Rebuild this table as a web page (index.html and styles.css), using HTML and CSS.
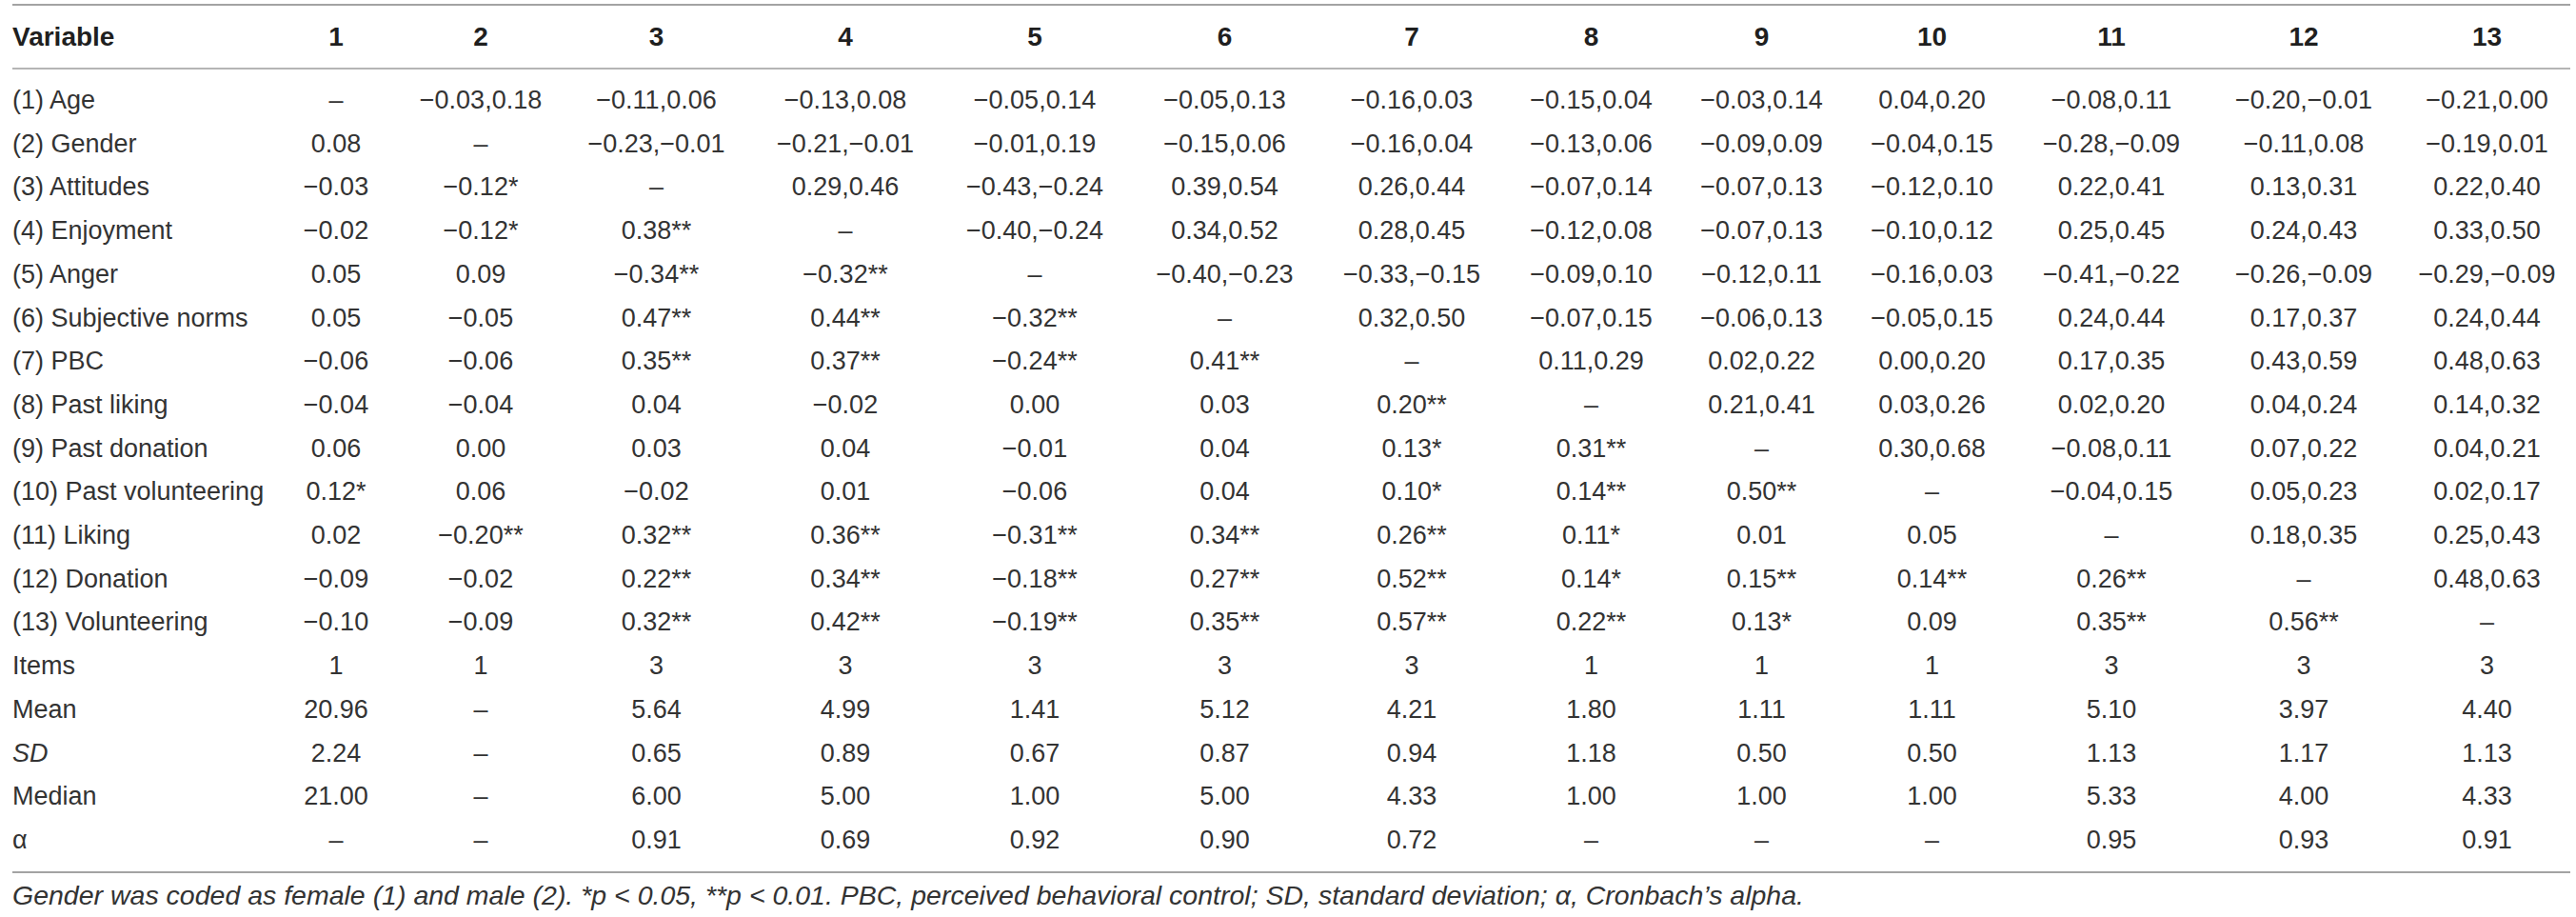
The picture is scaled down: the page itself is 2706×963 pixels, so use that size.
FILE: index.html
```html
<!DOCTYPE html>
<html lang="en">
<head>
    <meta charset="UTF-8">
    <meta name="viewport" content="width=device-width, initial-scale=1.0">
    <title>Correlations and descriptive statistics</title>
    <link rel="stylesheet" href="styles.css">
</head>
<body>

    <div class="table-wrap">
        <table class="corr-table">
            <colgroup>
                <col class="c-var">
                <col class="c-1">
                <col class="c-2">
                <col class="c-3">
                <col class="c-4">
                <col class="c-5">
                <col class="c-6">
                <col class="c-7">
                <col class="c-8">
                <col class="c-9">
                <col class="c-10">
                <col class="c-11">
                <col class="c-12">
                <col class="c-13">
            </colgroup>
            <thead>
                <tr>
                    <th>Variable</th><th>1</th><th>2</th><th>3</th><th>4</th><th>5</th><th>6</th><th>7</th><th>8</th><th>9</th><th>10</th><th>11</th><th>12</th><th>13</th>
                </tr>
            </thead>
            <tbody>
                <tr class="first-row">
                    <td>(1) Age</td><td>&ndash;</td><td>&minus;0.03,0.18</td><td>&minus;0.11,0.06</td><td>&minus;0.13,0.08</td><td>&minus;0.05,0.14</td><td>&minus;0.05,0.13</td><td>&minus;0.16,0.03</td><td>&minus;0.15,0.04</td><td>&minus;0.03,0.14</td><td>0.04,0.20</td><td>&minus;0.08,0.11</td><td>&minus;0.20,&minus;0.01</td><td>&minus;0.21,0.00</td>
                </tr>
                <tr>
                    <td>(2) Gender</td><td>0.08</td><td>&ndash;</td><td>&minus;0.23,&minus;0.01</td><td>&minus;0.21,&minus;0.01</td><td>&minus;0.01,0.19</td><td>&minus;0.15,0.06</td><td>&minus;0.16,0.04</td><td>&minus;0.13,0.06</td><td>&minus;0.09,0.09</td><td>&minus;0.04,0.15</td><td>&minus;0.28,&minus;0.09</td><td>&minus;0.11,0.08</td><td>&minus;0.19,0.01</td>
                </tr>
                <tr>
                    <td>(3) Attitudes</td><td>&minus;0.03</td><td>&minus;0.12*</td><td>&ndash;</td><td>0.29,0.46</td><td>&minus;0.43,&minus;0.24</td><td>0.39,0.54</td><td>0.26,0.44</td><td>&minus;0.07,0.14</td><td>&minus;0.07,0.13</td><td>&minus;0.12,0.10</td><td>0.22,0.41</td><td>0.13,0.31</td><td>0.22,0.40</td>
                </tr>
                <tr>
                    <td>(4) Enjoyment</td><td>&minus;0.02</td><td>&minus;0.12*</td><td>0.38**</td><td>&ndash;</td><td>&minus;0.40,&minus;0.24</td><td>0.34,0.52</td><td>0.28,0.45</td><td>&minus;0.12,0.08</td><td>&minus;0.07,0.13</td><td>&minus;0.10,0.12</td><td>0.25,0.45</td><td>0.24,0.43</td><td>0.33,0.50</td>
                </tr>
                <tr>
                    <td>(5) Anger</td><td>0.05</td><td>0.09</td><td>&minus;0.34**</td><td>&minus;0.32**</td><td>&ndash;</td><td>&minus;0.40,&minus;0.23</td><td>&minus;0.33,&minus;0.15</td><td>&minus;0.09,0.10</td><td>&minus;0.12,0.11</td><td>&minus;0.16,0.03</td><td>&minus;0.41,&minus;0.22</td><td>&minus;0.26,&minus;0.09</td><td>&minus;0.29,&minus;0.09</td>
                </tr>
                <tr>
                    <td>(6) Subjective norms</td><td>0.05</td><td>&minus;0.05</td><td>0.47**</td><td>0.44**</td><td>&minus;0.32**</td><td>&ndash;</td><td>0.32,0.50</td><td>&minus;0.07,0.15</td><td>&minus;0.06,0.13</td><td>&minus;0.05,0.15</td><td>0.24,0.44</td><td>0.17,0.37</td><td>0.24,0.44</td>
                </tr>
                <tr>
                    <td>(7) PBC</td><td>&minus;0.06</td><td>&minus;0.06</td><td>0.35**</td><td>0.37**</td><td>&minus;0.24**</td><td>0.41**</td><td>&ndash;</td><td>0.11,0.29</td><td>0.02,0.22</td><td>0.00,0.20</td><td>0.17,0.35</td><td>0.43,0.59</td><td>0.48,0.63</td>
                </tr>
                <tr>
                    <td>(8) Past liking</td><td>&minus;0.04</td><td>&minus;0.04</td><td>0.04</td><td>&minus;0.02</td><td>0.00</td><td>0.03</td><td>0.20**</td><td>&ndash;</td><td>0.21,0.41</td><td>0.03,0.26</td><td>0.02,0.20</td><td>0.04,0.24</td><td>0.14,0.32</td>
                </tr>
                <tr>
                    <td>(9) Past donation</td><td>0.06</td><td>0.00</td><td>0.03</td><td>0.04</td><td>&minus;0.01</td><td>0.04</td><td>0.13*</td><td>0.31**</td><td>&ndash;</td><td>0.30,0.68</td><td>&minus;0.08,0.11</td><td>0.07,0.22</td><td>0.04,0.21</td>
                </tr>
                <tr>
                    <td>(10) Past volunteering</td><td>0.12*</td><td>0.06</td><td>&minus;0.02</td><td>0.01</td><td>&minus;0.06</td><td>0.04</td><td>0.10*</td><td>0.14**</td><td>0.50**</td><td>&ndash;</td><td>&minus;0.04,0.15</td><td>0.05,0.23</td><td>0.02,0.17</td>
                </tr>
                <tr>
                    <td>(11) Liking</td><td>0.02</td><td>&minus;0.20**</td><td>0.32**</td><td>0.36**</td><td>&minus;0.31**</td><td>0.34**</td><td>0.26**</td><td>0.11*</td><td>0.01</td><td>0.05</td><td>&ndash;</td><td>0.18,0.35</td><td>0.25,0.43</td>
                </tr>
                <tr>
                    <td>(12) Donation</td><td>&minus;0.09</td><td>&minus;0.02</td><td>0.22**</td><td>0.34**</td><td>&minus;0.18**</td><td>0.27**</td><td>0.52**</td><td>0.14*</td><td>0.15**</td><td>0.14**</td><td>0.26**</td><td>&ndash;</td><td>0.48,0.63</td>
                </tr>
                <tr>
                    <td>(13) Volunteering</td><td>&minus;0.10</td><td>&minus;0.09</td><td>0.32**</td><td>0.42**</td><td>&minus;0.19**</td><td>0.35**</td><td>0.57**</td><td>0.22**</td><td>0.13*</td><td>0.09</td><td>0.35**</td><td>0.56**</td><td>&ndash;</td>
                </tr>
                <tr>
                    <td>Items</td><td>1</td><td>1</td><td>3</td><td>3</td><td>3</td><td>3</td><td>3</td><td>1</td><td>1</td><td>1</td><td>3</td><td>3</td><td>3</td>
                </tr>
                <tr>
                    <td>Mean</td><td>20.96</td><td>&ndash;</td><td>5.64</td><td>4.99</td><td>1.41</td><td>5.12</td><td>4.21</td><td>1.80</td><td>1.11</td><td>1.11</td><td>5.10</td><td>3.97</td><td>4.40</td>
                </tr>
                <tr>
                    <td><em>SD</em></td><td>2.24</td><td>&ndash;</td><td>0.65</td><td>0.89</td><td>0.67</td><td>0.87</td><td>0.94</td><td>1.18</td><td>0.50</td><td>0.50</td><td>1.13</td><td>1.17</td><td>1.13</td>
                </tr>
                <tr>
                    <td>Median</td><td>21.00</td><td>&ndash;</td><td>6.00</td><td>5.00</td><td>1.00</td><td>5.00</td><td>4.33</td><td>1.00</td><td>1.00</td><td>1.00</td><td>5.33</td><td>4.00</td><td>4.33</td>
                </tr>
                <tr class="last-row">
                    <td>&alpha;</td><td>&ndash;</td><td>&ndash;</td><td>0.91</td><td>0.69</td><td>0.92</td><td>0.90</td><td>0.72</td><td>&ndash;</td><td>&ndash;</td><td>&ndash;</td><td>0.95</td><td>0.93</td><td>0.91</td>
                </tr>
            </tbody>
        </table>

        <!-- Table footnote -->
        <p class="note">Gender was coded as female (1) and male (2). *p &lt; 0.05, **p &lt; 0.01. PBC, perceived behavioral control; SD, standard deviation; &alpha;, Cronbach&rsquo;s alpha.</p>
    </div>

</body>
</html>
```

FILE: styles.css
```css
body {
    margin: 0;
    padding: 4px 6px 0 13px;
    background-color: #ffffff;
    color: #333333;
    font-family: "Liberation Sans", Arial, sans-serif;
}

.table-wrap {
    width: 2687px;
}

.corr-table {
    width: 100%;
    table-layout: fixed;
    border-collapse: collapse;
    border-top: 2px solid #a3a3a3;
    border-bottom: 2px solid #a3a3a3;
}

/* Column widths */
.c-var { width: 273px; }
.c-1 { width: 134px; }
.c-2 { width: 170px; }
.c-3 { width: 199px; }
.c-4 { width: 198px; }
.c-5 { width: 200px; }
.c-6 { width: 199px; }
.c-7 { width: 194px; }
.c-8 { width: 183px; }
.c-9 { width: 175px; }
.c-10 { width: 183px; }
.c-11 { width: 194px; }
.c-12 { width: 210px; }
.c-13 { width: 175px; }

.corr-table th {
    height: 65px;
    padding: 0;
    font-size: 28px;
    font-weight: bold;
    color: #1f1f1f;
    text-align: center;
    vertical-align: middle;
    border-bottom: 2px solid #b5b5b5;
}

.corr-table td {
    height: 45.7px;
    padding: 0;
    font-size: 27px;
    line-height: 45.7px;
    text-align: center;
    white-space: nowrap;
}

.corr-table th:first-child,
.corr-table td:first-child {
    text-align: left;
}

.corr-table .first-row td {
    padding-top: 10px;
}

.corr-table .last-row td {
    padding-bottom: 9px;
}

.note {
    margin: 7px 0 0;
    font-size: 28.5px;
    font-style: italic;
    color: #333333;
}
```
